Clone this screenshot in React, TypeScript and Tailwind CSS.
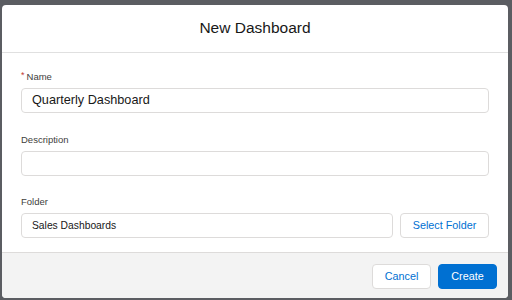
import React from "react";

const font = { fontFamily: '"Liberation Sans", Arial, sans-serif' };

function Field({
  label,
  required,
  value,
  children,
}: {
  label: string;
  required?: boolean;
  value?: string;
  children?: React.ReactNode;
}) {
  return (
    <div className="flex flex-col">
      <div className="h-[14px] leading-[14px] text-[9.5px] text-[#3e3e3c] mb-[4px] flex items-center">
        {required && (
          <span className="text-[#c23934] text-[9px] mr-[2px] -mt-[3px] leading-none">*</span>
        )}
        <span>{label}</span>
      </div>
      <div className="flex gap-[7px]">
        <div className="flex-1 h-[25px] rounded-[4px] border border-[#dddbda] bg-white flex items-center px-[10px] text-[#181818]">
          {value}
        </div>
        {children}
      </div>
    </div>
  );
}

export default function App() {
  return (
    <div
      className="w-[512px] h-[300px] bg-[#5b5d62] pt-[5px] pl-[2px] pr-[4px] pb-[2px] overflow-hidden"
      style={font}
    >
      <div className="w-[506px] h-[293px] bg-white rounded-[4px] flex flex-col overflow-hidden">
        <div className="h-[48px] border-b border-[#e0e0e0] flex items-center justify-center">
          <span className="text-[15.5px] text-[#181818] -mt-[1px]">New Dashboard</span>
        </div>
        <div className="flex-1 flex flex-col gap-[20px] px-[19px] pt-[17px]">
          <div className="text-[12.7px]">
            <Field label="Name" required value="Quarterly Dashboard" />
          </div>
          <Field label="Description" value="" />
          <div className="text-[10.3px] -mt-[1px]">
            <Field label="Folder" value="Sales Dashboards">
              <button className="w-[89px] h-[25px] rounded-[4px] border border-[#dddbda] bg-white text-[#0070d2] text-[10.8px] flex items-center justify-center">
                Select Folder
              </button>
            </Field>
          </div>
        </div>
        <div className="h-[46px] bg-[#f3f3f3] border-t border-[#dddbda] flex items-start justify-end gap-[7px] pt-[11px] pr-[11px]">
          <button className="w-[59px] h-[25px] rounded-[4px] border border-[#dddbda] bg-white text-[#0070d2] text-[10.8px] flex items-center justify-center">
            Cancel
          </button>
          <button className="w-[59px] h-[25px] rounded-[4px] border border-[#0070d2] bg-[#0070d2] text-white text-[10.8px] flex items-center justify-center">
            Create
          </button>
        </div>
      </div>
    </div>
  );
}
